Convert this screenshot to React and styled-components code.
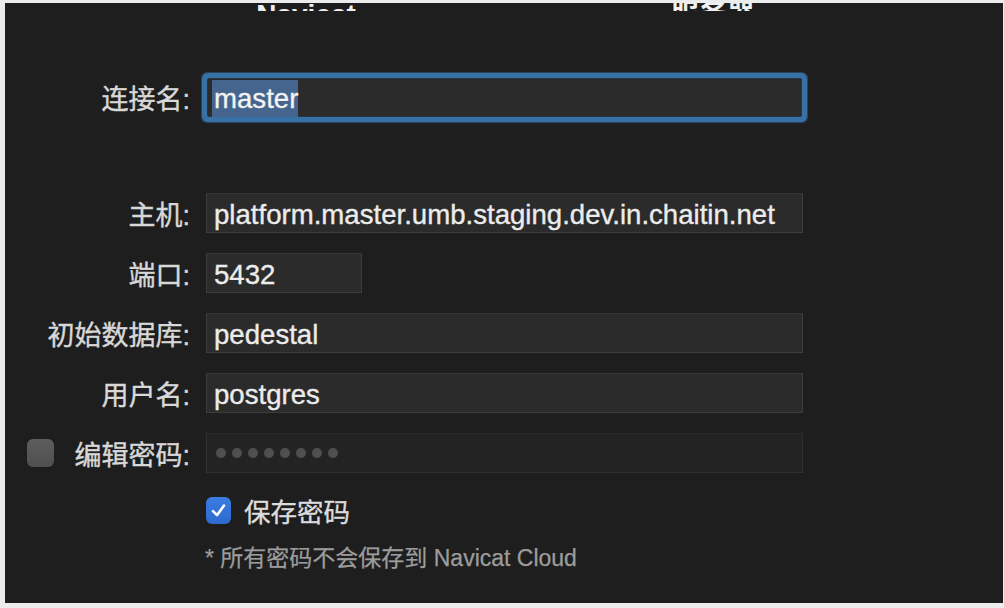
import React from 'react'
import styled, { createGlobalStyle } from 'styled-components'

const GlobalStyle = createGlobalStyle`
  html, body {
    margin: 0;
    padding: 0;
    background: #ececec;
  }
  body {
    font-family: "Liberation Sans", "Noto Sans CJK SC", sans-serif;
  }
`

const Panel = styled.div`
  margin: 3px 1px 5px 5px;
  height: 600px;
  background: #1e1e1e;
  display: flex;
  flex-direction: column;
  overflow: hidden;
`

// only the lower edge of the tab titles shows above the form
const TabBar = styled.div`
  height: 8px;
  overflow: hidden;
  display: grid;
  grid-template-columns: 602px 212px;
  justify-items: center;
  align-items: end;
`

const TabLabel = styled.div`
  font-size: 28px;
  line-height: 24px;
  font-weight: bold;
  color: #f0f0f0;
`

const Row = styled.div`
  display: grid;
  grid-template-columns: 185px auto;
  column-gap: 16px;
  align-items: center;
  height: 40px;
  margin-top: ${p => p.$top || 20}px;
`

const Label = styled.div`
  display: flex;
  align-items: center;
  justify-content: ${p => (p.$withBox ? 'space-between' : 'flex-end')};
  padding-left: ${p => (p.$withBox ? '22px' : '0')};
  font-size: 27px;
  color: #d8d8d8;
  -webkit-text-stroke: 0.4px #d8d8d8;
  white-space: nowrap;
`

const Field = styled.div`
  box-sizing: border-box;
  width: ${p => p.$width || 597}px;
  height: 40px;
  display: flex;
  align-items: center;
  padding: 3px 0 0 7px;
  background: ${p => (p.$disabled ? '#232323' : '#2b2b2b')};
  border: 1px solid ${p => (p.$disabled ? '#313131' : '#3d3d3d')};
  border-top-color: ${p => (p.$disabled ? '#2c2c2c' : '#353535')};
  font-size: 27.6px;
  color: #ececec;
  -webkit-text-stroke: 0.35px #ececec;
  white-space: nowrap;
`

const FocusField = styled(Field)`
  width: 595px;
  height: 39px;
  margin-left: 1px;
  padding: 2px 0 0 4px;
  border: 1px solid #23364a;
  border-radius: 2px;
  box-shadow: 0 0 0 5px #3871a6, 0 0 1px 6px rgba(56, 113, 166, 0.5);
`

const Selection = styled.span`
  background: #45658f;
  color: #f4f4f4;
  padding: 2px 0 2px 2px;
  line-height: 33px;
`

const Dots = styled.span`
  display: flex;
  gap: 6px;
  padding: 0 0 3px 2px;
`

const Dot = styled.span`
  width: 10px;
  height: 10px;
  border-radius: 50%;
  background: #4f4f4f;
`

const CheckBox = styled.span`
  box-sizing: border-box;
  width: ${p => (p.$checked ? 25 : 27)}px;
  height: ${p => (p.$checked ? 27 : 28)}px;
  border-radius: 6px;
  display: inline-flex;
  align-items: center;
  justify-content: center;
  background: ${p => (p.$checked ? 'linear-gradient(#3a7de0, #2d6ad0)' : 'linear-gradient(#5d5d5d, #4f4f4f)')};
`

const SaveRow = styled.div`
  display: flex;
  align-items: center;
  gap: 13px;
  margin: 18px 0 0 201px;
  font-size: 26.5px;
  color: #dcdcdc;
  -webkit-text-stroke: 0.35px #dcdcdc;
`

const Note = styled.div`
  margin: 13px 0 0 200px;
  font-size: 23px;
  line-height: 30px;
  color: #9c9c9c;
  -webkit-text-stroke: 0.25px #9c9c9c;
`

export default function App() {
  return (
    <>
      <GlobalStyle />
      <Panel>
        <TabBar>
          <TabLabel>Navicat</TabLabel>
          <TabLabel>服务器</TabLabel>
        </TabBar>

        <Row $top={66}>
          <Label>连接名:</Label>
          <FocusField>
            <Selection>master</Selection>
          </FocusField>
        </Row>

        <Row $top={76}>
          <Label>主机:</Label>
          <Field>platform.master.umb.staging.dev.in.chaitin.net</Field>
        </Row>
        <Row>
          <Label>端口:</Label>
          <Field $width={156}>5432</Field>
        </Row>
        <Row>
          <Label>初始数据库:</Label>
          <Field>pedestal</Field>
        </Row>
        <Row>
          <Label>用户名:</Label>
          <Field>postgres</Field>
        </Row>
        <Row>
          <Label $withBox>
            <CheckBox />
            编辑密码:
          </Label>
          <Field $disabled>
            <Dots>
              {Array.from({ length: 8 }).map((_, i) => (
                <Dot key={i} />
              ))}
            </Dots>
          </Field>
        </Row>

        <SaveRow>
          <CheckBox $checked>
            <svg width="17" height="17" viewBox="0 0 17 17">
              <path d="M3 9.2 L7 13.2 L14 3.5" fill="none" stroke="#fff" strokeWidth="2.6" strokeLinecap="round" strokeLinejoin="round" />
            </svg>
          </CheckBox>
          保存密码
        </SaveRow>
        <Note>* 所有密码不会保存到 Navicat Cloud</Note>
      </Panel>
    </>
  )
}
